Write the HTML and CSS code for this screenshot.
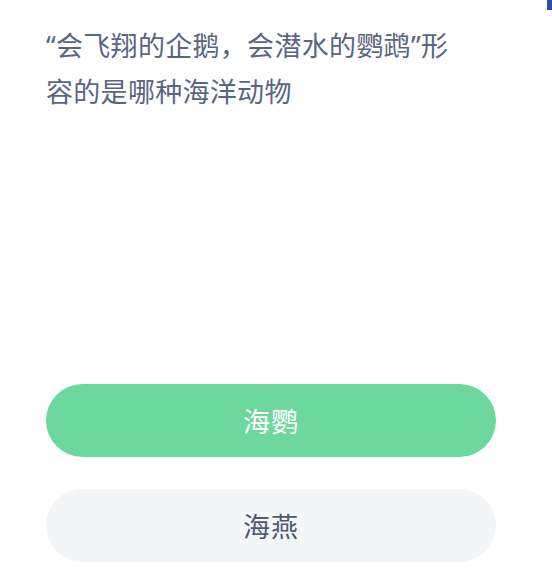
FILE: index.html
```html
<!DOCTYPE html>
<html lang="zh-CN">
<head>
<meta charset="utf-8">
<link rel="stylesheet" href="styles.css">
</head>
<body>
<div class="corner"></div>
<main class="quiz">
  <h1 class="question">“会飞翔的企鹅，会潜水的鹦鹉”形容的是哪种海洋动物</h1>
  <div class="options">
    <button class="option option-correct">海鹦</button>
    <button class="option">海燕</button>
  </div>
</main>
</body>
</html>
```
FILE: styles.css
```css
html, body {
  margin: 0;
  padding: 0;
  background: #ffffff;
}
body {
  width: 552px;
  height: 581px;
  overflow: hidden;
  position: relative;
  font-family: "Noto Sans", "Noto Sans CJK SC", sans-serif;
}
.corner {
  position: absolute;
  top: 0;
  right: 0;
  width: 5px;
  height: 10px;
  background: #2b4ea6;
}
.quiz {
  display: flex;
  flex-direction: column;
  padding: 23px 56px 0 46px;
  height: 558px;
}
.question {
  margin: 0;
  width: 420px;
  font-size: 27px;
  font-weight: 400;
  line-height: 46px;
  letter-spacing: 0.3px;
  color: #5a6584;
}
.options {
  margin-top: auto;
  display: flex;
  flex-direction: column;
  gap: 32px;
  margin-bottom: 19px;
}
.option {
  width: 450px;
  height: 73px;
  border: none;
  border-radius: 37px;
  background: #f4f5f7;
  color: #4f5a72;
  font-family: "Noto Sans", "Noto Sans CJK SC", sans-serif;
  font-size: 27px;
  font-weight: 400;
  letter-spacing: 1px;
  padding: 0;
}
.option-correct {
  background: #6cd89e;
  color: #ffffff;
}
```
